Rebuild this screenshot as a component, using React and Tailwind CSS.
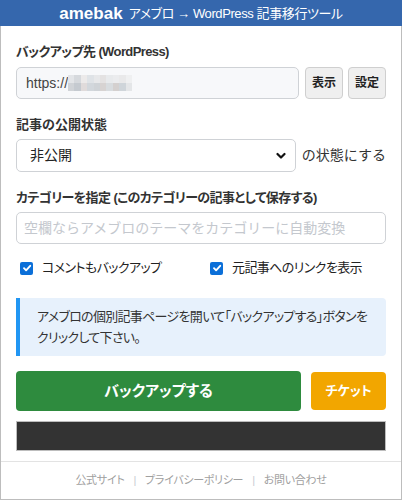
import React from "react";

const JP = '"Liberation Sans", "Noto Sans CJK JP", sans-serif';

function Check() {
  return (
    <span className="inline-flex h-[13px] w-[13px] shrink-0 items-center justify-center rounded-[2px] bg-[#0b6fd8]">
      <svg width="10" height="10" viewBox="0 0 10 10" fill="none">
        <path d="M2 5.2 L4.1 7.3 L8.2 2.8" stroke="white" strokeWidth="1.9" strokeLinecap="round" strokeLinejoin="round" />
      </svg>
    </span>
  );
}

function Mosaic() {
  const cols = ["#e3e5e8", "#d6d9dd", "#eceaea", "#dfe3e7", "#e7e8ea", "#e4e2e2", "#e8eaec", "#ebecee", "#e9e9ea", "#eff0f1"];
  const cols2 = ["#d0d3d7", "#c5cad0", "#e0dbdb", "#d2d7dc", "#cfd3d7", "#d7d3d2", "#d8dcdf", "#d4d0cf", "#cfd5da", "#e4e6e8"];
  return (
    <div className="flex flex-col">
      <div className="flex">
        {cols.map((c, i) => (
          <span key={i} className="h-[8px] w-[6.4px]" style={{ background: c }} />
        ))}
      </div>
      <div className="flex">
        {cols2.map((c, i) => (
          <span key={i} className="h-[8px] w-[6.4px]" style={{ background: c }} />
        ))}
      </div>
    </div>
  );
}

export default function App() {
  return (
    <div className="flex h-[500px] w-[402px] flex-col bg-white text-[#333]" style={{ fontFamily: JP }}>
      <header className="flex h-[26px] shrink-0 items-center justify-center bg-[#3567ad] text-white">
        <span className="text-[17px] font-bold leading-none">amebak</span>
        <span className="ml-[6px] text-[13px] leading-none tracking-[-0.4px] [font-feature-settings:'palt']">アメブロ → WordPress 記事移行ツール</span>
      </header>
      <main className="flex flex-1 flex-col border-x border-b border-[#bdbdbd]">
        <div className="px-[15px] pt-[17px]">
          <div className="h-[18px] whitespace-nowrap text-[13px] font-bold leading-[18px] tracking-[-0.6px] [font-feature-settings:'palt']">バックアップ先 (WordPress)</div>
          <div className="mt-[6px] flex h-[32px] gap-[6px]">
            <div className="flex flex-1 items-center rounded-[5px] border border-[#cfd2d6] bg-[#f7f8fa] pl-[9px] text-[14px] text-[#444]">
              <span>https://</span>
              <Mosaic />
            </div>
            <button className="w-[38px] rounded-[4px] border border-[#cfcfcf] bg-[#efefef] text-[12px] font-bold text-[#222]">表示</button>
            <button className="ml-[-1px] w-[38px] rounded-[4px] border border-[#cfcfcf] bg-[#efefef] text-[12px] font-bold text-[#222]">設定</button>
          </div>

          <div className="mt-[17px] h-[18px] text-[13px] font-bold leading-[18px]">記事の公開状態</div>
          <div className="mt-[5px] flex h-[33px] items-center gap-[6px]">
            <div className="flex h-full flex-1 items-center justify-between rounded-[5px] border border-[#cfd2d6] bg-white pl-[13px] pr-[9px] text-[14px] text-[#222]">
              <span>非公開</span>
              <svg width="10" height="8" viewBox="0 0 10 8" fill="none">
                <path d="M1.5 2 L5 5.5 L8.5 2" stroke="#111" strokeWidth="2.2" strokeLinecap="round" strokeLinejoin="round" />
              </svg>
            </div>
            <span className="shrink-0 whitespace-nowrap text-[14px] text-[#333]">の状態にする</span>
          </div>

          <div className="mt-[17px] h-[18px] whitespace-nowrap text-[13px] font-bold leading-[18px] tracking-[-0.6px] [font-feature-settings:'palt']">カテゴリーを指定 (このカテゴリーの記事として保存する)</div>
          <div className="mt-[5px] flex h-[32px] items-center rounded-[5px] border border-[#cfd2d6] bg-white pl-[7px] text-[14px] text-[#c4c8ce]">
            空欄ならアメブロのテーマをカテゴリーに自動変換
          </div>

          <div className="mt-[15px] flex h-[18px] items-center whitespace-nowrap text-[13px] tracking-[-0.6px] text-[#222] [font-feature-settings:'palt']">
            <div className="ml-[4px] flex w-[190px] items-center gap-[9px]">
              <Check />
              <span>コメントもバックアップ</span>
            </div>
            <div className="flex items-center gap-[9px]">
              <Check />
              <span>元記事へのリンクを表示</span>
            </div>
          </div>

          <div className="mt-[21px] whitespace-nowrap rounded-r-[4px] border-l-4 border-[#2196f3] bg-[#e7f1fc] py-[8px] pl-[17px] pr-[10px] text-[13px] leading-[21px] tracking-[-0.7px] text-[#333] [font-feature-settings:'palt']">
            アメブロの個別記事ページを開いて「バックアップする」ボタンを
            <br />
            クリックして下さい。
          </div>

          <div className="mt-[15px] flex h-[40px] items-center gap-[10px]">
            <button className="h-[40px] flex-1 rounded-[4px] bg-[#2e8b3e] text-[15px] font-bold text-white [font-feature-settings:'palt']">バックアップする</button>
            <button className="h-[38px] w-[75px] rounded-[4px] bg-[#f2a600] text-[13px] font-bold text-white [font-feature-settings:'palt']">チケット</button>
          </div>

          <div className="mt-[10px] h-[30px] border border-[#bdbdbd] bg-[#333333]" />
        </div>
        <div className="mt-[10px] flex flex-1 items-center justify-center border-t border-[#e3e3e3] text-[11px] tracking-[-0.3px] text-[#a0a0a0] [font-feature-settings:'palt']">
          <span>公式サイト</span>
          <span className="mx-[9px] text-[#c8ccd2]">|</span>
          <span>プライバシーポリシー</span>
          <span className="mx-[9px] text-[#c8ccd2]">|</span>
          <span>お問い合わせ</span>
        </div>
      </main>
    </div>
  );
}
